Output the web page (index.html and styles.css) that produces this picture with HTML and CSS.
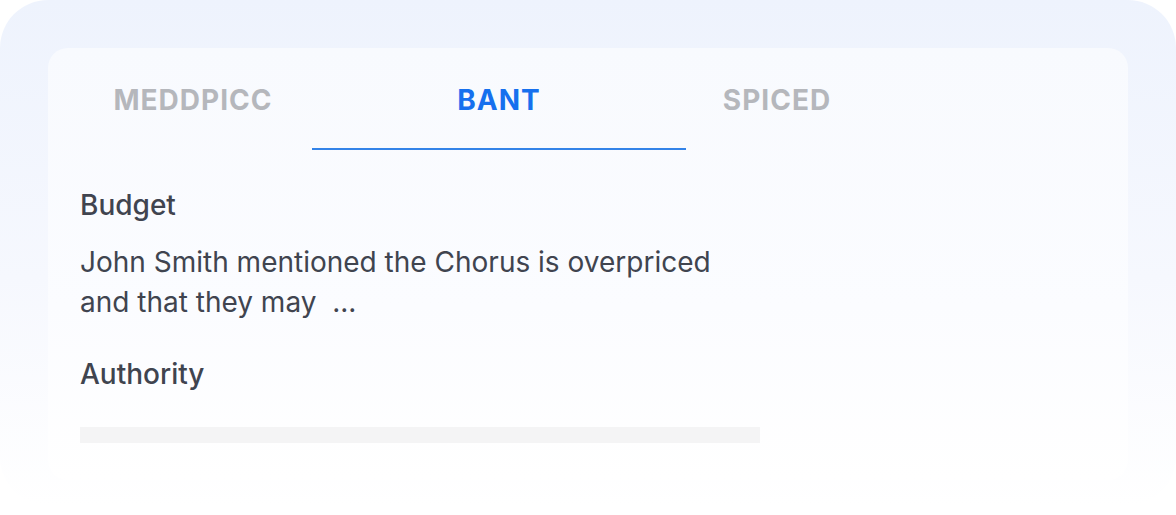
FILE: index.html
```html
<!DOCTYPE html>
<html lang="en">
<head>
    <meta charset="UTF-8">
    <meta name="viewport" content="width=device-width, initial-scale=1.0">
    <title>Deal Qualification</title>
    <link rel="stylesheet" href="styles.css">
</head>
<body>
    <div class="frame">
        <div class="card">
            <div class="tabs">
                <div class="tab tab-meddpicc">MEDDPICC</div>
                <div class="tab tab-bant active">BANT</div>
                <div class="tab tab-spiced">SPICED</div>
            </div>

            <div class="content">
                <h3 class="field-title">Budget</h3>
                <p class="field-text">John Smith mentioned the Chorus is overpriced<br>and that they may&nbsp; ...</p>

                <h3 class="field-title authority">Authority</h3>
                <div class="skeleton"></div>
            </div>
        </div>
    </div>
</body>
</html>
```

FILE: styles.css
```css
body {
    margin: 0;
    background: #ffffff;
    font-family: 'Inter', 'Noto Sans', sans-serif;
}

.frame {
    width: 1176px;
    height: 505px;
    box-sizing: border-box;
    padding: 48px 48px 0;
    border-radius: 48px;
    background: linear-gradient(180deg, #eef3fd 0%, #f6f8fe 55%, #ffffff 100%);
}

.card {
    height: 432px;
    border-radius: 20px;
    background: linear-gradient(180deg, #f8fafe 0%, #fbfcff 60%, #ffffff 100%);
}

.tabs {
    display: flex;
    padding: 34px 0 0 26px;
}

.tab {
    font-size: 28px;
    line-height: 36px;
    font-weight: 700;
    letter-spacing: 1px;
    color: #b5b7bc;
    text-align: center;
    padding-bottom: 30px;
    border-bottom: 2px solid transparent;
}

.tab-meddpicc {
    width: 238px;
}

.tab-bant {
    width: 374px;
}

.tab-spiced {
    width: 182px;
}

.tab.active {
    color: #1670ee;
    border-bottom-color: #3383e8;
}

.content {
    padding: 39px 32px 0;
}

.field-title {
    margin: 0;
    font-size: 28px;
    line-height: 32px;
    font-weight: 500;
    color: #40444f;
}

.field-text {
    margin: 21px 0 0;
    font-size: 28px;
    line-height: 40px;
    font-weight: 400;
    color: #40444f;
}

.authority {
    margin-top: 36px;
}

.skeleton {
    width: 680px;
    height: 16px;
    margin-top: 37px;
    background: #f4f4f5;
}
```
